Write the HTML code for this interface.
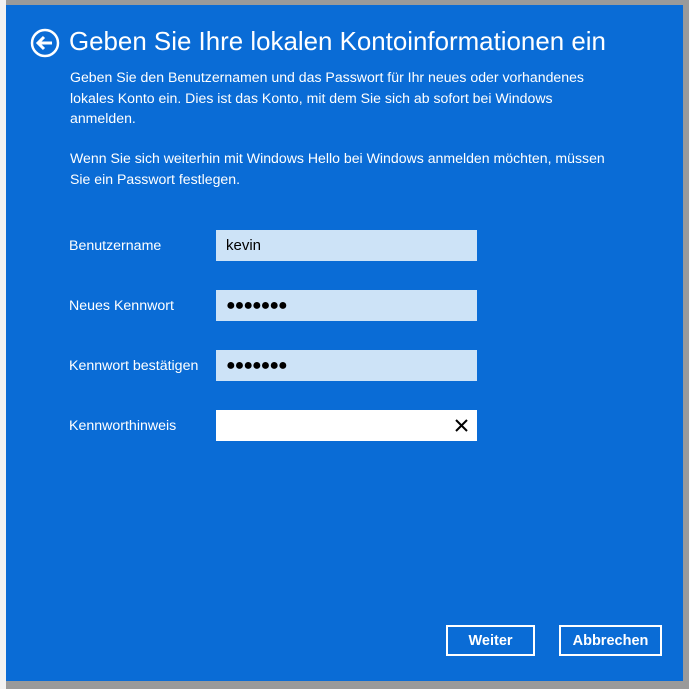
<!DOCTYPE html>
<html><head><meta charset="utf-8"><style>
html,body{margin:0;padding:0}
body{width:689px;height:689px;background:#9a9a9a;position:relative;overflow:hidden;font-family:"Liberation Sans",sans-serif}
.bgl{position:absolute;left:0;top:0;width:6px;height:689px;background:#f2f2f2}
.panel{position:absolute;left:6px;top:5px;width:677px;height:676px;background:#0a6cd6;color:#fff}
h1{position:absolute;left:63px;top:23px;margin:0;font-weight:normal;font-size:25.9px;white-space:nowrap}
.back{position:absolute;left:24px;top:23px}
p{position:absolute;left:64px;margin:0;font-size:14.1px;line-height:20.5px;white-space:nowrap}
.lab{position:absolute;left:63px;font-size:14.2px}
.f{position:absolute;left:210px;width:261px;height:31px;background:#cde3f7;color:#000;font-size:15px;box-sizing:border-box;padding-left:10px;line-height:31px}
.f.w{background:#fff}
.dots{font-size:16px;letter-spacing:-1px}
.btn{position:absolute;top:620px;height:31px;border:2px solid #fff;box-sizing:border-box;font-weight:bold;font-size:14.5px;text-align:center;line-height:29px}
</style></head><body>
<div class="bgl"></div>
<div class="panel">
<svg class="back" width="32" height="32" viewBox="0 0 32 32"><circle cx="15" cy="15" r="13" fill="none" stroke="#fff" stroke-width="2.5"/><path d="M8 15H22M14 9L8 15L14 21" fill="none" stroke="#fff" stroke-width="3"/></svg>
<h1>Geben Sie Ihre lokalen Kontoinformationen ein</h1>
<p style="top:62px">Geben Sie den Benutzernamen und das Passwort für Ihr neues oder vorhandenes<br>lokales Konto ein. Dies ist das Konto, mit dem Sie sich ab sofort bei Windows<br>anmelden.</p>
<p style="top:143px">Wenn Sie sich weiterhin mit Windows Hello bei Windows anmelden möchten, müssen<br>Sie ein Passwort festlegen.</p>
<div class="lab" style="top:233px">Benutzername</div>
<div class="f" style="top:225px">kevin</div>
<div class="lab" style="top:293px">Neues Kennwort</div>
<div class="f dots" style="top:285px">●●●●●●●</div>
<div class="lab" style="top:353px">Kennwort bestätigen</div>
<div class="f dots" style="top:345px">●●●●●●●</div>
<div class="lab" style="top:413px">Kennworthinweis</div>
<div class="f w" style="top:405px"><svg style="position:absolute;right:9px;top:9px" width="13" height="13" viewBox="0 0 13 13"><path d="M1 1L12 12M12 1L1 12" stroke="#000" stroke-width="2"/></svg></div>
<div class="btn" style="left:440px;width:89px">Weiter</div>
<div class="btn" style="left:553px;width:103px">Abbrechen</div>
</div>
</body></html>
